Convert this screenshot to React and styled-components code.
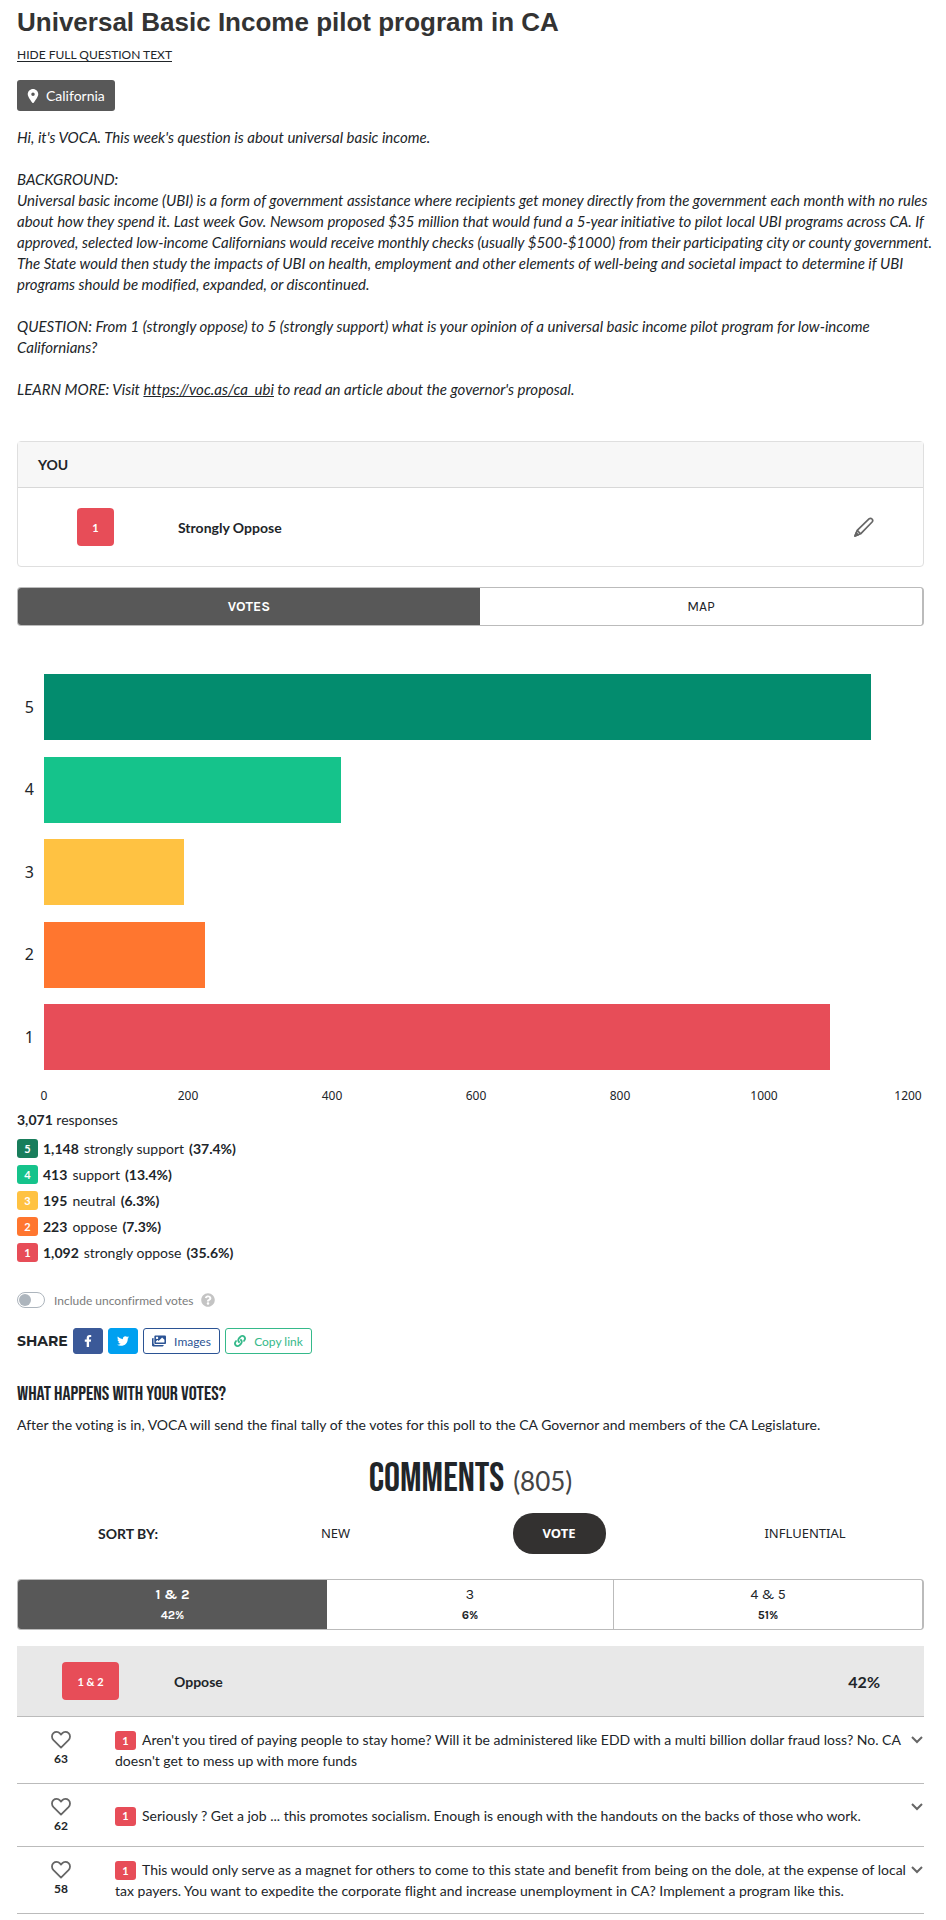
import React, { useState } from 'react';
import styled, { createGlobalStyle } from 'styled-components';
import { FaFacebookF, FaTwitter, FaImages, FaLink, FaQuestionCircle } from 'react-icons/fa';
import { FaLocationDot } from 'react-icons/fa6';

const COLORS = { 5: '#038c6e', 4: '#15c38b', 3: '#ffc242', 2: '#ff762f', 1: '#e74d58' };

const GlobalStyle = createGlobalStyle`
  * { box-sizing: border-box; }
  body {
    margin: 0;
    background: #fff;
    color: #212529;
    font-family: Lato, "Liberation Sans", sans-serif;
    font-size: 14px;
    line-height: 21px;
    font-variant-ligatures: none;
  }
  button { font: inherit; color: inherit; cursor: pointer; }
  h1, h2, h3, p { margin: 0; }
`;

const Page = styled.main`
  padding: 6px 22px 6px 17px;
`;

const Title = styled.h1`
  font: bold 26px/32px "Liberation Sans", Arial, sans-serif;
  color: #333;
`;

const TextToggle = styled.button`
  display: block;
  margin-top: 8px;
  padding: 0;
  border: 0;
  background: none;
  font-size: 12px;
  line-height: 18px;
  text-decoration: underline;
  text-underline-offset: 2px;
`;

const Place = styled.span`
  display: inline-flex;
  align-items: center;
  gap: 6px;
  height: 31px;
  margin-top: 16px;
  padding: 0 10px 0 9px;
  border-radius: 3px;
  background: #585858;
  color: #fff;
`;

const Question = styled.div`
  margin: 16px -12px 0 0;
  font-size: 15px;
  font-style: italic;

  p + p { margin-top: 21px; }
  a { color: inherit; }
`;

const Card = styled.section`
  margin-top: 41px;
  border: 1px solid #dfdfdf;
  border-radius: 4px;
`;

const CardHeader = styled.h3`
  padding: 12px 20px;
  border-bottom: 1px solid #d8d8d8;
  background: #f7f7f7;
  font-size: 14px;
  line-height: 21px;
`;

const CardBody = styled.div`
  display: flex;
  align-items: center;
  padding: 20px 49px 20px 59px;
`;

const BigBadge = styled.span`
  flex: none;
  display: inline-flex;
  align-items: center;
  justify-content: center;
  width: ${(p) => p.$width}px;
  height: 38px;
  border-radius: 4px;
  background: ${COLORS[1]};
  color: #fff;
  font-size: 11px;
  font-weight: 700;
`;

const VoteName = styled.strong`
  flex: 1;
  margin-left: ${(p) => p.$gap}px;
`;

const IconButton = styled.button`
  display: flex;
  padding: 0;
  border: 0;
  background: none;
  color: #666;
`;

const Tabs = styled.div`
  display: grid;
  grid-template-columns: ${(p) => p.$columns};
  margin-top: ${(p) => p.$top}px;
  border: 1px solid #bbb;
  border-right-width: 2px;
  border-radius: 4px;
  overflow: hidden;
`;

const Tab = styled.button`
  height: ${(p) => p.$height}px;
  padding: 0;
  border: 0;
  border-left: ${(p) => (p.$divider ? '1px solid #bbb' : '0')};
  background: ${(p) => (p.$active ? '#585858' : '#fff')};
  color: ${(p) => (p.$active ? '#fff' : '#212529')};
  font-family: Karla, Inter, sans-serif;
  font-size: 14px;
  font-weight: ${(p) => (p.$active ? 700 : 400)};
  line-height: 20px;

  small {
    display: block;
    font-size: 12px;
    font-weight: 700;
  }
`;

const Chart = styled.figure`
  margin: 48px 16px 0 0;
  font-family: "Noto Sans", sans-serif;
`;

const Bars = styled.div`
  display: flex;
  flex-direction: column;
  justify-content: space-between;
  height: 396px;
`;

const BarRow = styled.div`
  display: flex;
  align-items: center;
  height: 66px;
  font-size: 16px;
`;

const BarLabel = styled.span`
  width: 27px;
  padding-right: 10px;
  text-align: right;
`;

const BarTrack = styled.div`
  flex: 1;
  height: 100%;
`;

const Bar = styled.div`
  height: 100%;
  background: ${(p) => COLORS[p.$vote]};
`;

const Axis = styled.div`
  display: flex;
  justify-content: space-between;
  margin: 16px 0 0 27px;
  font-size: 12px;
  line-height: 20px;
`;

const Tick = styled.span`
  display: flex;
  justify-content: center;
  width: 0;
`;

const Total = styled.p`
  margin-top: 3px;
`;

const Legend = styled.ul`
  display: grid;
  gap: 5px;
  margin: 8px 0 0;
  padding: 0;
  list-style: none;
`;

const LegendItem = styled.li`
  display: flex;
  align-items: center;
  gap: 5px;
`;

const Badge = styled.span`
  display: inline-flex;
  align-items: center;
  justify-content: center;
  width: 21px;
  height: 19px;
  border-radius: 3px;
  background: ${(p) => p.$color || COLORS[p.$vote]};
  color: #fff;
  font-size: 11px;
  font-weight: 700;
  line-height: 16px;
  vertical-align: bottom;
`;

const SwitchRow = styled.div`
  display: flex;
  align-items: center;
  height: 20px;
  margin-top: 27px;
  color: #7c7c7c;
  font-size: 12px;

  label { display: flex; align-items: center; gap: 9px; }
  svg { margin-left: 8px; color: #c4c4c4; }
`;

const Switch = styled.input`
  appearance: none;
  display: flex;
  align-items: center;
  width: 28px;
  height: 16px;
  margin: 0;
  padding: 0 1px;
  border: 1px solid #adb5bd;
  border-radius: 8px;

  &::before {
    content: "";
    width: 12px;
    height: 12px;
    border-radius: 50%;
    background: #adb5bd;
  }
  &:checked { justify-content: flex-end; }
`;

const ShareRow = styled.div`
  display: flex;
  align-items: center;
  gap: 5px;
  margin-top: 18px;
`;

const ShareLabel = styled.strong`
  width: 51px;
  font: 700 14px/21px Montserrat, Inter, sans-serif;
`;

const ShareButton = styled.button`
  display: flex;
  align-items: center;
  justify-content: center;
  gap: 8px;
  width: ${(p) => p.$width}px;
  height: 26px;
  padding: 0;
  border: 1px solid ${(p) => p.$color};
  border-radius: 3px;
  background: ${(p) => (p.$solid ? p.$color : '#fff')};
  color: ${(p) => (p.$solid ? '#fff' : p.$color)};
  font-size: 12px;
`;

const Heading = styled.h3`
  margin-top: 28px;
  font: 400 20px/24px "Bebas Neue", "Liberation Sans", sans-serif;
`;

const Paragraph = styled.p`
  margin-top: 8px;
`;

const CommentsTitle = styled.h2`
  display: flex;
  align-items: baseline;
  justify-content: center;
  gap: 9px;
  margin-top: 20px;
  font: 400 40px/48px "Bebas Neue", "Liberation Sans", sans-serif;

  span {
    color: #444;
    font: 400 26px/48px Lato, sans-serif;
  }
`;

const SortRow = styled.div`
  display: grid;
  grid-template-columns: 222fr 193fr 254fr 238fr;
  align-items: center;
  justify-items: center;
  margin-top: 8px;
`;

const SortButton = styled.button`
  height: 41px;
  padding: 0 30px;
  border: 0;
  border-radius: 20px;
  background: ${(p) => (p.$active ? '#333130' : 'none')};
  color: ${(p) => (p.$active ? '#fff' : '#212529')};
  font-family: "Noto Sans", sans-serif;
  font-size: 13px;
  font-weight: ${(p) => (p.$active ? 700 : 400)};
`;

const GroupHeader = styled.div`
  display: flex;
  align-items: center;
  margin-top: 16px;
  padding: 16px 44px 16px 45px;
  border-bottom: 1px solid #bbb;
  background: #e8e8e8;
`;

const GroupShare = styled.strong`
  font-size: 16px;
`;

const Comment = styled.article`
  display: flex;
  padding: 12px 1px 10px 34px;
  border-bottom: 1px solid #bbb;
`;

const LikeButton = styled.button`
  flex: none;
  display: flex;
  flex-direction: column;
  align-items: center;
  width: 20px;
  height: 40px;
  padding: 2px 0 0;
  border: 0;
  background: none;
  font-size: 12px;
  font-weight: 700;
  line-height: 20px;

  svg { flex: none; }
`;

const CommentText = styled.p`
  flex: 1;
  align-self: center;
  margin: 0 0 0 44px;
  padding-bottom: 2px;

  ${Badge} { margin-right: 6px; }
`;

const Chevron = styled.svg`
  display: block;
`;

const ExpandButton = styled(IconButton)`
  align-self: flex-start;
  margin-top: 7px;
`;

const VOTES = [
  { vote: 5, count: 1148, name: 'strongly support', share: '37.4%', badge: '#187d5b' },
  { vote: 4, count: 413, name: 'support', share: '13.4%' },
  { vote: 3, count: 195, name: 'neutral', share: '6.3%' },
  { vote: 2, count: 223, name: 'oppose', share: '7.3%' },
  { vote: 1, count: 1092, name: 'strongly oppose', share: '35.6%' },
];
const AXIS_MAX = 1200;
const TICKS = [0, 200, 400, 600, 800, 1000, 1200];

const COMMENTS = [
  { likes: 63, text: "Aren't you tired of paying people to stay home? Will it be administered like EDD with a multi billion dollar fraud loss? No. CA doesn't get to mess up with more funds" },
  { likes: 62, text: 'Seriously ? Get a job ... this promotes socialism. Enough is enough with the handouts on the backs of those who work.' },
  { likes: 58, text: 'This would only serve as a magnet for others to come to this state and benefit from being on the dole, at the expense of local tax payers. You want to expedite the corporate flight and increase unemployment in CA? Implement a program like this.' },
];

function Pencil() {
  return (
    <svg width="20" height="20" viewBox="0 0 20 20" fill="none" stroke="currentColor" strokeWidth="1.7" strokeLinejoin="round">
      <path d="M1 19 3.2 13.4 15 1.9Q16.6 .6 18 2 19.4 3.5 18.1 5L6.6 16.8Z" />
      <path d="M3.2 13.4 6.6 16.8" />
      <path d="M1 19 2.2 15.8 4.2 17.8Z" fill="currentColor" />
    </svg>
  );
}

function Heart() {
  return (
    <svg width="20" height="18" viewBox="0 0 20 18" fill="none" stroke="#666" strokeWidth="1.8" strokeLinejoin="round">
      <path d="M10 16.6 2.5 9.2C.5 7.1.5 3.9 2.4 2.2 4.3.5 7.2.6 8.9 2.4L10 3.6 11.1 2.4C12.8.6 15.7.5 17.6 2.2 19.5 3.9 19.5 7.1 17.5 9.2Z" />
    </svg>
  );
}

export default function App() {
  const [unconfirmed, setUnconfirmed] = useState(false);
  return (
    <Page>
      <GlobalStyle />
      <Title>Universal Basic Income pilot program in CA</Title>
      <TextToggle type="button">HIDE FULL QUESTION TEXT</TextToggle>
      <Place><FaLocationDot size={14} />California</Place>

      <Question>
        <p>Hi, it's VOCA. This week's question is about universal basic income.</p>
        <p>
          BACKGROUND:<br />
          Universal basic income (UBI) is a form of government assistance where recipients get money directly from the government each month with no rules about how they spend it. Last week Gov. Newsom proposed $35 million that would fund a 5-year initiative to pilot local UBI programs across CA. If approved, selected low-income Californians would receive monthly checks (usually $500-$1000) from their participating city or county government. The State would then study the impacts of UBI on health, employment and other elements of well-being and societal impact to determine if UBI programs should be modified, expanded, or discontinued.
        </p>
        <p>QUESTION: From 1 (strongly oppose) to 5 (strongly support) what is your opinion of a universal basic income pilot program for low-income Californians?</p>
        <p>LEARN MORE: Visit <a href="https://voc.as/ca_ubi">https://voc.as/ca_ubi</a> to read an article about the governor's proposal.</p>
      </Question>

      <Card>
        <CardHeader>YOU</CardHeader>
        <CardBody>
          <BigBadge $width={37}>1</BigBadge>
          <VoteName $gap={64}>Strongly Oppose</VoteName>
          <IconButton type="button" aria-label="Edit vote"><Pencil /></IconButton>
        </CardBody>
      </Card>

      <Tabs $columns="462fr 442fr" $top={20}>
        <Tab type="button" $height={37} $active>VOTES</Tab>
        <Tab type="button" $height={37}>MAP</Tab>
      </Tabs>

      <Chart>
        <Bars>
          {VOTES.map((v) => (
            <BarRow key={v.vote}>
              <BarLabel>{v.vote}</BarLabel>
              <BarTrack>
                <Bar $vote={v.vote} style={{ width: `${(v.count / AXIS_MAX) * 100}%` }} />
              </BarTrack>
            </BarRow>
          ))}
        </Bars>
        <Axis>{TICKS.map((t) => <Tick key={t}>{t}</Tick>)}</Axis>
      </Chart>

      <Total><strong>3,071</strong> responses</Total>
      <Legend>
        {VOTES.map((v) => (
          <LegendItem key={v.vote}>
            <Badge $vote={v.vote} $color={v.badge}>{v.vote}</Badge>
            <strong>{v.count.toLocaleString('en-US')}</strong>
            <span>{v.name}</span>
            <strong>({v.share})</strong>
          </LegendItem>
        ))}
      </Legend>

      <SwitchRow>
        <label>
          <Switch type="checkbox" role="switch" checked={unconfirmed} onChange={(e) => setUnconfirmed(e.target.checked)} />
          Include unconfirmed votes
        </label>
        <FaQuestionCircle size={14} />
      </SwitchRow>

      <ShareRow>
        <ShareLabel>SHARE</ShareLabel>
        <ShareButton type="button" aria-label="Share on Facebook" $width={30} $color="#3b5998" $solid><FaFacebookF size={12} /></ShareButton>
        <ShareButton type="button" aria-label="Share on Twitter" $width={30} $color="#00a0f0" $solid><FaTwitter size={12} /></ShareButton>
        <ShareButton type="button" $width={77} $color="#2b5394"><FaImages size={14} />Images</ShareButton>
        <ShareButton type="button" $width={87} $color="#35b98a"><FaLink size={12} />Copy link</ShareButton>
      </ShareRow>

      <Heading>WHAT HAPPENS WITH YOUR VOTES?</Heading>
      <Paragraph>After the voting is in, VOCA will send the final tally of the votes for this poll to the CA Governor and members of the CA Legislature.</Paragraph>

      <CommentsTitle>COMMENTS <span>(805)</span></CommentsTitle>
      <SortRow>
        <strong>SORT BY:</strong>
        <SortButton type="button">NEW</SortButton>
        <SortButton type="button" $active>VOTE</SortButton>
        <SortButton type="button">INFLUENTIAL</SortButton>
      </SortRow>

      <Tabs $columns="309fr 286fr 309fr" $top={25}>
        <Tab type="button" $height={49} $active>1 &amp; 2<small>42%</small></Tab>
        <Tab type="button" $height={49}>3<small>6%</small></Tab>
        <Tab type="button" $height={49} $divider>4 &amp; 5<small>51%</small></Tab>
      </Tabs>

      <GroupHeader>
        <BigBadge $width={57}>1 &amp; 2</BigBadge>
        <VoteName $gap={55}>Oppose</VoteName>
        <GroupShare>42%</GroupShare>
      </GroupHeader>
      {COMMENTS.map((c) => (
        <Comment key={c.likes}>
          <LikeButton type="button" aria-label={`Like, ${c.likes} likes`}><Heart />{c.likes}</LikeButton>
          <CommentText><Badge $vote={1}>1</Badge>{c.text}</CommentText>
          <ExpandButton type="button" aria-label="Expand comment">
            <Chevron width="12" height="8" viewBox="0 0 12 8" fill="none" stroke="#666" strokeWidth="2">
              <path d="m1 1 5 5 5-5" />
            </Chevron>
          </ExpandButton>
        </Comment>
      ))}
    </Page>
  );
}
